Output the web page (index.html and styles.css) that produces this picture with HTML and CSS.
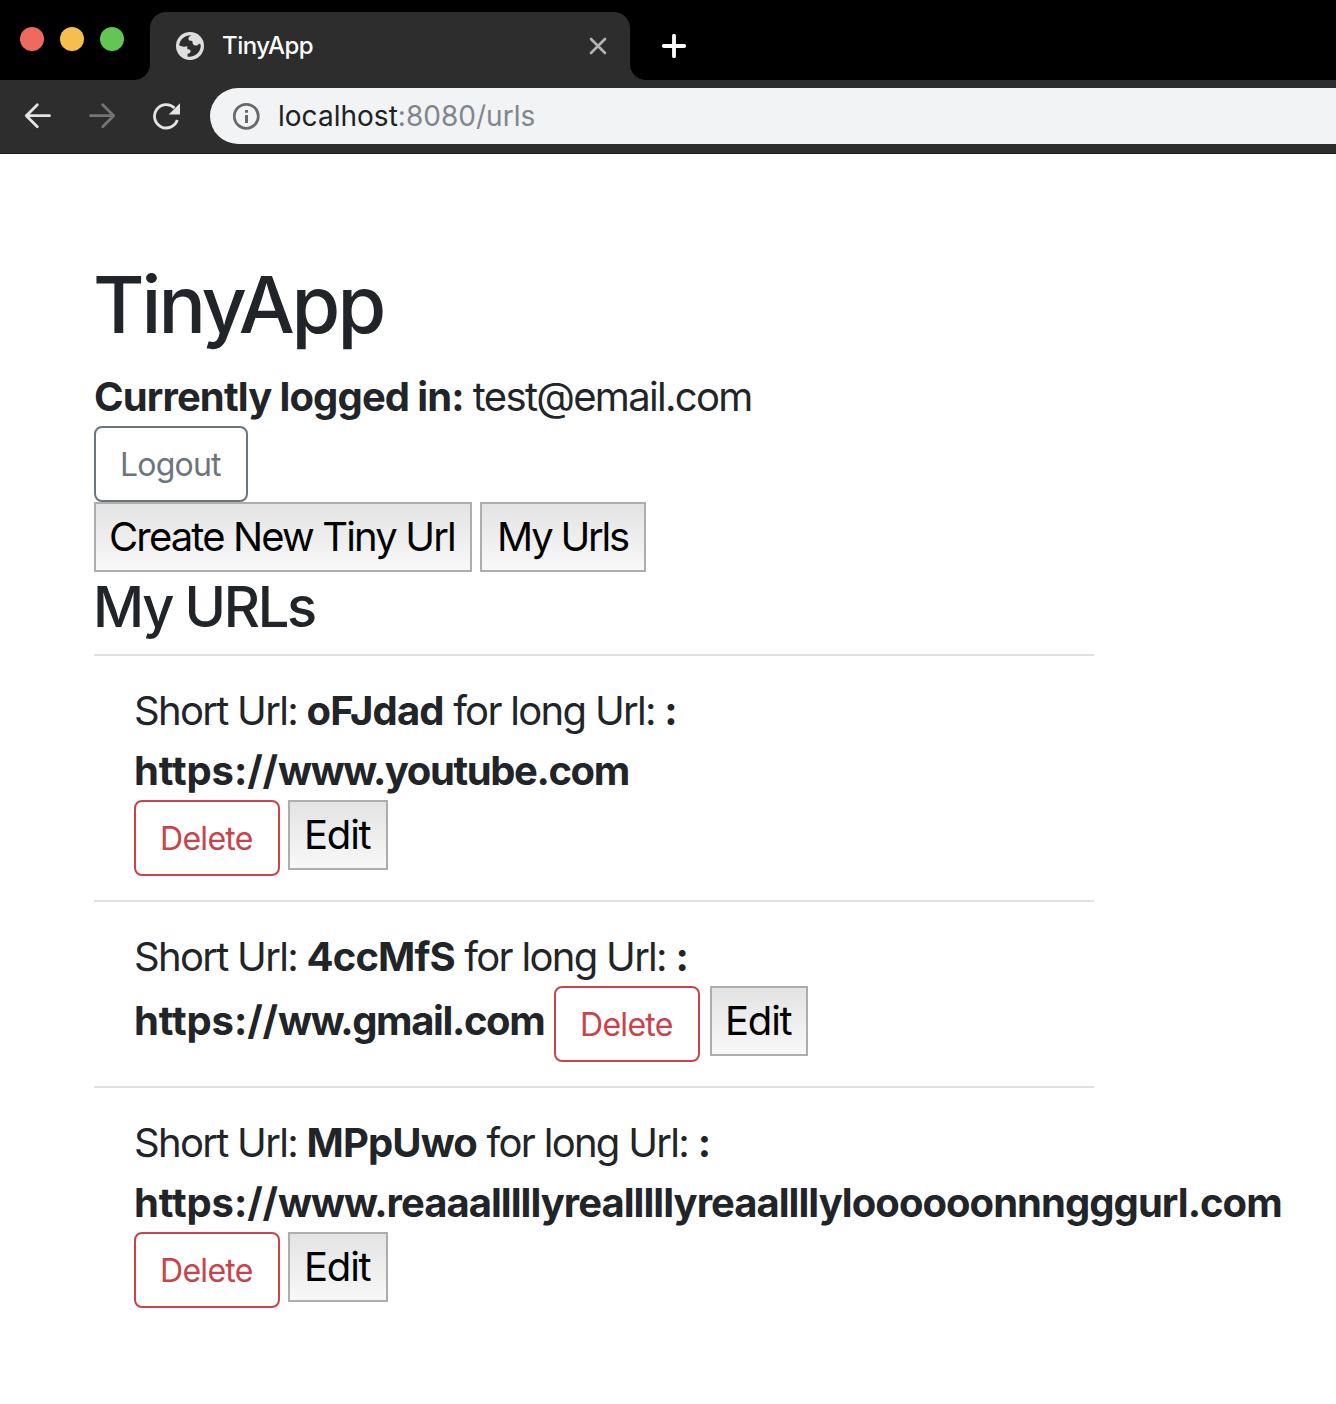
FILE: index.html
```
<!DOCTYPE html>
<html lang="en">
<head>
<meta charset="utf-8">
<title>TinyApp</title>
<link rel="stylesheet" href="styles.css">
</head>
<body>
<header class="browser">
  <div class="tabstrip">
    <div class="lights"><i class="red"></i><i class="yellow"></i><i class="green"></i></div>
    <div class="tab">
      <svg class="globe" width="28" height="28" viewBox="0 0 28 28"><circle cx="14" cy="14" r="14" fill="#dedede"/><path d="M3.200 13.500C3.600 7.800 8.500 3.200 15.500 3.300C13.500 4.200 12.300 5.200 12.500 7.200C12.700 8.500 13.500 8.700 15.500 8.700C17 8.900 16.300 11.200 17 12.300C18.500 14.300 21.500 13.800 22.600 12.300C23.300 11.400 24.300 11.800 24.700 13C25.300 19.800 19 25.600 11.600 24.700V21.700C13.200 21.800 14.600 21 14.600 19.300C14.600 17.500 13.500 17.200 11.300 17.200V14.200C8.500 14.900 5.600 14.800 3.200 13.500Z" fill="#2d2d2d"/></svg>
      <span class="tab-title">TinyApp</span>
      <svg class="close" width="18" height="18" viewBox="0 0 18 18"><path d="M2 2L16 16M16 2L2 16" stroke="#b3b3b3" stroke-width="2.600" stroke-linecap="round"/></svg>
    </div>
    <svg class="plus" width="24" height="24" viewBox="0 0 24 24"><path d="M12 1.800V22.200M1.800 12H22.200" stroke="#fff" stroke-width="3.800" stroke-linecap="round"/></svg>
  </div>
  <div class="toolbar">
    <svg class="nav-icons" width="162" height="28" viewBox="0 0 162 28" fill="none" stroke-width="2.800" stroke-linecap="round" stroke-linejoin="round">
      <path d="M25.500 13.700H2.300M13.300 2.700L2.300 13.700L13.300 24.700" stroke="#e4e4e4"/>
      <path d="M66.500 13.700H89.700M78.700 2.700L89.700 13.700L78.700 24.700" stroke="#757575"/>
      <path d="M150.500 6A11.700 11.700 0 1 0 153.300 18" stroke="#e4e4e4" stroke-linecap="butt"/>
      <path d="M156 1.200V12.500H144.700Z" fill="#e4e4e4" stroke="none"/>
    </svg>
    <div class="address">
      <svg width="28" height="28" viewBox="0 0 28 28"><circle cx="14.300" cy="14.300" r="12" fill="none" stroke="#65686d" stroke-width="2.700"/><path d="M13 8H16V10.800H13ZM13 13H16V21H13Z" fill="#65686d"/></svg>
      <span class="url">localhost<span class="path">:8080/urls</span></span>
    </div>
  </div>
</header>
<main class="page">
  <h1>TinyApp</h1>
  <p class="user"><b>Currently logged in:</b> test@email.com</p>
  <button class="btn secondary">Logout</button>
  <nav class="menu"><a class="plain create">Create New Tiny Url</a><a class="plain mine">My Urls</a></nav>
  <h2>My URLs</h2>
  <ul class="list">
    <li>
      <p>Short Url: <b>oFJdad</b> for long Url: <b>:</b></p>
      <p><b class="long-url"><span class="scheme">https://</span>www.youtube.com</b></p>
      <div class="actions"><button class="btn danger">Delete</button><a class="plain edit">Edit</a></div>
    </li>
    <li>
      <p>Short Url: <b>4ccMfS</b> for long Url: <b>:</b></p>
      <div class="actions wide"><b class="long-url inline-url"><span class="scheme">https://</span>ww.gmail.com</b><button class="btn danger">Delete</button><a class="plain edit">Edit</a></div>
    </li>
    <li>
      <p>Short Url: <b>MPpUwo</b> for long Url: <b>:</b></p>
      <p><b class="long-url extended"><span class="scheme">https://</span>www.reaaalllllyrealllllyreaallllyloooooonnngggurl.com</b></p>
      <div class="actions"><button class="btn danger">Delete</button><a class="plain edit">Edit</a></div>
    </li>
  </ul>
</main>
</body>
</html>
```

FILE: styles.css
```
* { box-sizing: border-box; }
body {
  margin: 0;
  background: #fff;
  color: #212529;
  font: 400 40px/60px Inter, "Liberation Sans", sans-serif;
  letter-spacing: -1.7px;
  overflow: hidden;
}
h1, h2, p, ul { margin: 0; padding: 0; }
svg { display: block; flex: none; }
b { font-weight: 700; letter-spacing: -0.87px; }

/* browser chrome */
.tabstrip { display: flex; height: 80px; background: #000; }
.lights { display: flex; gap: 16px; width: 150px; padding: 27px 0 0 20px; }
.lights i { width: 24px; height: 24px; border-radius: 50%; }
.red { background: #ee6a5f; }
.yellow { background: #f6be50; }
.green { background: #62c655; }
.tab {
  position: relative;
  display: flex;
  align-items: center;
  width: 480px;
  height: 68px;
  margin-top: 12px;
  padding: 0 23px 0 26px;
  border-radius: 16px 16px 0 0;
  background: #2d2d2d;
}
.tab::before, .tab::after {
  content: "";
  position: absolute;
  bottom: 0;
  width: 16px;
  height: 16px;
}
.tab::before { left: -16px; background: radial-gradient(circle at 0 0, transparent 15.500px, #2d2d2d 16.500px); }
.tab::after { right: -16px; background: radial-gradient(circle at 100% 0, transparent 15.500px, #2d2d2d 16.500px); }
.tab-title {
  flex: 1;
  margin-left: 18px;
  color: #fff;
  font-size: 24px;
  font-weight: 500;
  line-height: 30px;
  letter-spacing: -0.5px;
}
.plus { margin: 34px 0 0 32px; }
.toolbar {
  display: flex;
  height: 74px;
  padding-top: 8px;
  background: #2d2d2d;
  border-bottom: 1px solid #1c1c1c;
}
.nav-icons { margin: 14px 24px 0; }
.address {
  display: flex;
  flex: 1;
  align-items: center;
  height: 56px;
  padding-left: 22px;
  border-radius: 28px 0 0 28px;
  background: #f1f3f4;
}
.url {
  margin-left: 18px;
  color: #202124;
  font-size: 28px;
  line-height: 36px;
  letter-spacing: 0.02px;
}
.path { color: #80868b; }

/* page */
.page { width: 1094px; padding: 102px 0 0 94px; }
h1 { font-size: 79px; font-weight: 500; line-height: 96px; letter-spacing: -3.050px; margin-left: -1px; }
.user { height: 60px; margin-top: 14px; line-height: 61px; white-space: nowrap; word-spacing: -0.5px; }
.btn {
  display: flex;
  align-items: center;
  height: 76px;
  padding: 2px 0 0 24px;
  border: 2px solid;
  border-radius: 8px;
  background: #fff;
  font: 400 32px/48px Inter, "Liberation Sans", sans-serif;
  letter-spacing: -0.7px;
}
.secondary { width: 154px; color: #6c757d; letter-spacing: -0.8px; }
.danger { width: 146px; color: #c94349; }
.menu, .actions { display: flex; gap: 8px; }
.plain {
  height: 70px;
  padding-left: 14px;
  border: 2px solid #adadad;
  background: linear-gradient(#e3e3e3, #f8f8f8);
  color: #000;
  line-height: 66px;
  white-space: nowrap;
}
.create { width: 378px; padding-left: 13px; letter-spacing: -1.860px; }
.mine { width: 166px; padding-left: 15px; letter-spacing: -2.200px; }
.edit { width: 100px; letter-spacing: -1.2px; }
h2 { height: 82px; font-size: 56px; font-weight: 500; line-height: 70px; letter-spacing: -2.340px; margin-left: -1px; }
.list { list-style: none; }
.list li { padding: 24px 0 24px 40px; border-top: 2px solid #dee0e1; white-space: nowrap; }
.list p { height: 60px; line-height: 62px; }
.long-url { letter-spacing: -1.4px; }
.long-url.extended { letter-spacing: -0.965px; }
.scheme { letter-spacing: -0.1px; }
.inline-url { width: 412px; line-height: 70px; }
.wide .edit { width: 98px; margin-left: 2px; padding-left: 13px; }
```
